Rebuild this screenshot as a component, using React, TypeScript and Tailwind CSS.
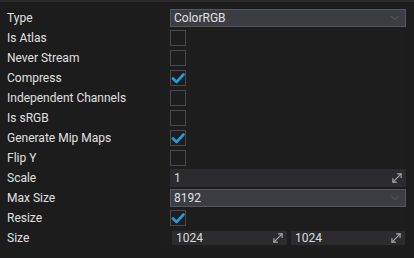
import { ChevronDown, MoveDiagonal } from 'lucide-react';

type Row =
    | { label: string; kind: 'dropdown'; value: string }
    | { label: string; kind: 'check'; checked: boolean }
    | { label: string; kind: 'number'; value: string }
    | { label: string; kind: 'size'; w: string; h: string };

const rows: Row[] = [
    { label: 'Type', kind: 'dropdown', value: 'ColorRGB' },
    { label: 'Is Atlas', kind: 'check', checked: false },
    { label: 'Never Stream', kind: 'check', checked: false },
    { label: 'Compress', kind: 'check', checked: true },
    { label: 'Independent Channels', kind: 'check', checked: false },
    { label: 'Is sRGB', kind: 'check', checked: false },
    { label: 'Generate Mip Maps', kind: 'check', checked: true },
    { label: 'Flip Y', kind: 'check', checked: false },
    { label: 'Scale', kind: 'number', value: '1' },
    { label: 'Max Size', kind: 'dropdown', value: '8192' },
    { label: 'Resize', kind: 'check', checked: true },
    { label: 'Size', kind: 'size', w: '1024', h: '1024' },
];

function CheckBox({ checked }: { checked: boolean }) {
    return (
        <div className="w-4 h-4 border border-[#4a4a4d] flex items-center justify-center">
            {checked && (
                <svg width="14" height="14" viewBox="0 0 14 14">
                    <polyline points="2,7.5 5.5,11 12.5,3.5" fill="none" stroke="#1f9be0" strokeWidth="2.6" strokeLinecap="round" strokeLinejoin="round" />
                </svg>
            )}
        </div>
    );
}

function Dropdown({ value }: { value: string }) {
    return (
        <div className="w-[236px] h-[18px] bg-[#3c3d43] border border-[#55565b] flex items-center justify-between pl-[3px] pr-[3px] text-[#e0e0e0]">
            <span>{value}</span>
            <ChevronDown className="w-[14px] h-[14px] text-[#62636a]" strokeWidth={1.5} />
        </div>
    );
}

function NumberBox({ value, className }: { value: string; className: string }) {
    return (
        <div className={`bg-[#2c2c2f] flex items-center justify-between pl-[4px] pr-[2px] text-[#dadada] ${className}`}>
            <span>{value}</span>
            <MoveDiagonal className="w-[14px] h-[14px] text-[#a8a8aa]" strokeWidth={2} />
        </div>
    );
}

export default function App() {
    return (
        <div
            className="w-[414px] h-[258px] bg-[#1c1c1c] border-t-2 border-[#2a2a2b] pt-[6px] text-[12px] overflow-hidden"
            style={{ fontFamily: 'Roboto, "Noto Sans", sans-serif' }}
        >
            <div className="grid grid-cols-[166px_240px]">
                {rows.map((row) => (
                    <div key={row.label} className="contents">
                        <div className="h-5 flex items-center pl-[7px] pb-[1px] text-[#e0e0e0]">{row.label}</div>
                        <div className="h-5 flex items-center pl-1 bg-[#1d1d1e]">
                            {row.kind === 'dropdown' && <Dropdown value={row.value} />}
                            {row.kind === 'check' && <CheckBox checked={row.checked} />}
                            {row.kind === 'number' && <NumberBox value={row.value} className="w-[237px] h-[18px]" />}
                            {row.kind === 'size' && (
                                <div className="flex gap-1 pl-[2px]">
                                    <NumberBox value={row.w} className="w-[115px] h-[14px]" />
                                    <NumberBox value={row.h} className="w-[114px] h-[14px]" />
                                </div>
                            )}
                        </div>
                    </div>
                ))}
            </div>
        </div>
    );
}
